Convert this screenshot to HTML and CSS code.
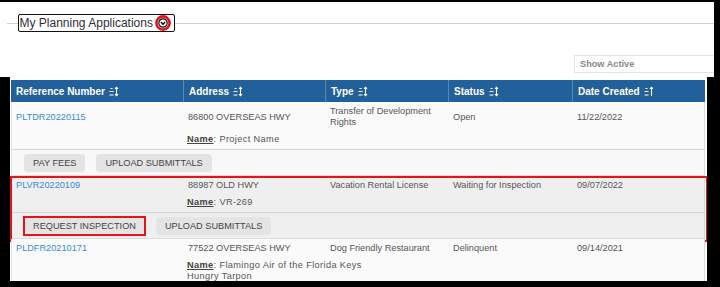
FILE: index.html
```html
<!DOCTYPE html>
<html>
<head>
<meta charset="utf-8">
<link rel="stylesheet" href="styles.css">
</head>
<body>
<div class="frame">
  <div class="top">
    <div class="legend-row">
      <div class="legend">
        <span class="legend-text">My Planning Applications</span>
        <span class="toggle">
          <svg width="16" height="16" viewBox="0 0 16 16">
            <circle cx="8" cy="8" r="6.6" fill="#fff" stroke="#e3141b" stroke-width="2.6"/>
            <circle cx="8" cy="8" r="4.2" fill="#fff" stroke="#111" stroke-width="1.2"/>
            <path d="M5.9 7.1 L8 9.3 L10.1 7.1" fill="none" stroke="#111" stroke-width="1.5"/>
          </svg>
        </span>
      </div>
    </div>
    <div class="filter-row"><div class="select">Show Active</div></div>
  </div>
  <div class="bottom">
    <div class="table">
      <div class="thead">
        <div class="th">Reference Number <svg class="sort" width="10" height="11" viewBox="0 0 10 11"><path d="M1.5 2.5h2M0.5 5.5h4M0.5 9h4" stroke="#fff" stroke-width="1.1"/><path d="M7.5 1.2v8.6M6 2.8l1.5-1.6 1.5 1.6M6 8.2l1.5 1.6 1.5-1.6" stroke="#fff" fill="none" stroke-width="1.1"/></svg></div>
        <div class="th">Address <svg class="sort" width="10" height="11" viewBox="0 0 10 11"><path d="M1.5 2.5h2M0.5 5.5h4M0.5 9h4" stroke="#fff" stroke-width="1.1"/><path d="M7.5 1.2v8.6M6 2.8l1.5-1.6 1.5 1.6M6 8.2l1.5 1.6 1.5-1.6" stroke="#fff" fill="none" stroke-width="1.1"/></svg></div>
        <div class="th">Type <svg class="sort" width="10" height="11" viewBox="0 0 10 11"><path d="M1.5 2.5h2M0.5 5.5h4M0.5 9h4" stroke="#fff" stroke-width="1.1"/><path d="M7.5 1.2v8.6M6 2.8l1.5-1.6 1.5 1.6M6 8.2l1.5 1.6 1.5-1.6" stroke="#fff" fill="none" stroke-width="1.1"/></svg></div>
        <div class="th">Status <svg class="sort" width="10" height="11" viewBox="0 0 10 11"><path d="M1.5 2.5h2M0.5 5.5h4M0.5 9h4" stroke="#fff" stroke-width="1.1"/><path d="M7.5 1.2v8.6M6 2.8l1.5-1.6 1.5 1.6M6 8.2l1.5 1.6 1.5-1.6" stroke="#fff" fill="none" stroke-width="1.1"/></svg></div>
        <div class="th">Date Created <svg class="sort" width="10" height="11" viewBox="0 0 10 11"><path d="M1.5 2.5h2M0.5 5.5h4M0.5 9h4" stroke="#fff" stroke-width="1.1"/><path d="M7.5 1.2v8.8M6 2.8l1.5-1.6 1.5 1.6" stroke="#fff" fill="none" stroke-width="1.1"/></svg></div>
      </div>

      <div class="rec rec-light">
        <div class="main">
          <div class="td"><a class="link">PLTDR20220115</a></div>
          <div class="td">86800 OVERSEAS HWY</div>
          <div class="td">Transfer of Development<br>Rights</div>
          <div class="td">Open</div>
          <div class="td">11/22/2022</div>
        </div>
        <div class="name-row"><div class="name"><u class="name-label">Name</u>: Project Name</div></div>
        <div class="actions actions-light">
          <span class="btn">PAY FEES</span>
          <span class="btn">UPLOAD SUBMITTALS</span>
        </div>
      </div>

      <div class="rec rec-grey">
        <div class="main">
          <div class="td"><a class="link">PLVR20220109</a></div>
          <div class="td">88987 OLD HWY</div>
          <div class="td">Vacation Rental License</div>
          <div class="td">Waiting for Inspection</div>
          <div class="td">09/07/2022</div>
        </div>
        <div class="name-row"><div class="name"><u class="name-label">Name</u>: VR-269</div></div>
        <div class="actions">
          <span class="btn btn-marked">REQUEST INSPECTION</span>
          <span class="btn">UPLOAD SUBMITTALS</span>
        </div>
        <div class="highlight"></div>
      </div>

      <div class="rec rec-light">
        <div class="main">
          <div class="td"><a class="link">PLDFR20210171</a></div>
          <div class="td">77522 OVERSEAS HWY</div>
          <div class="td">Dog Friendly Restaurant</div>
          <div class="td">Delinquent</div>
          <div class="td">09/14/2021</div>
        </div>
        <div class="name-row name-row-last"><div class="name"><u class="name-label">Name</u>: Flamingo Air of the Florida Keys Hungry Tarpon</div></div>
      </div>
    </div>
  </div>
</div>
</body>
</html>
```

FILE: styles.css
```css
* { box-sizing: border-box; }
html, body { margin: 0; padding: 0; }
body {
  background: #000;
  width: 720px;
  height: 287px;
  overflow: hidden;
  font-family: "Liberation Sans", Arial, sans-serif;
  color: #555;
}
.frame { padding-top: 2px; }

.top {
  width: 714px;
  height: 75px;
  background: #fff;
  overflow: hidden;
}
.legend-row {
  display: flex;
  align-items: center;
  padding-top: 12px;
}
.legend-row::before {
  content: "";
  width: 11px;
  margin-left: 7px;
  border-top: 1px solid #cfcfcf;
}
.legend-row::after {
  content: "";
  flex: 1;
  border-top: 1px solid #cfcfcf;
}
.legend {
  display: flex;
  align-items: center;
  height: 18px;
  width: 157px;
  border: 1.5px solid #111;
  border-radius: 2px;
  padding-left: 0.5px;
}
.legend-text {
  font-size: 12px;
  color: #2f2f38;
  line-height: 14px;
}
.toggle { display: flex; margin-left: 2px; }

.filter-row { margin-top: 23px; }
.select {
  margin-left: 574px;
  width: 150px;
  height: 18px;
  border: 1px solid #e3e3e3;
  padding-left: 5px;
  font-size: 9.2px;
  font-weight: bold;
  color: #8a8a8a;
  line-height: 16px;
}

.bottom {
  margin-left: 10px;
  width: 697px;
  height: 204px;
  background: #fff;
  padding-top: 3px;
  padding-left: 1px;
  overflow: hidden;
}
.table { width: 694px; }

.thead, .main {
  display: grid;
  grid-template-columns: 172px 142px 123px 124px 133px;
}
.thead {
  background: #22609b;
  height: 22px;
}
.th {
  display: flex;
  align-items: center;
  gap: 4px;
  padding-left: 5px;
  color: #fff;
  font-size: 10px;
  font-weight: bold;
  border-left: 1px solid #5a88b5;
}
.th:first-child { border-left: none; }
.sort { flex: none; }

.rec {
  position: relative;
  border-right: 1px solid #d9d9d9;
  border-left: 1px solid #e2e2e2;
}
.rec-light { background: #fafafa; }
.rec-grey { background: #efefef; }

.main {
  padding: 4px 0;
  align-items: center;
  font-size: 9.2px;
  line-height: 11px;
}
.td { padding-left: 4px; }
.link { color: #3b8ad6; text-decoration: none; }

.name-row {
  padding: 1.5px 0 4.5px 175px;
  border-bottom: 1px solid #d6d6d6;
  font-size: 9.2px;
  letter-spacing: 0.38px;
  line-height: 11px;
}
.name-row-last { border-bottom: none; }
.name { max-width: 182px; color: #555; }
.name-label { color: #444; font-weight: bold; }

.actions {
  display: flex;
  gap: 11px;
  padding: 4px 12px 3px;
  border-bottom: 1px solid #dcdcdc;
}
.actions-light { background: #f8f8f8; }
.btn {
  height: 18px;
  padding: 0 9px;
  background: #e4e4e4;
  border-radius: 4px;
  font-size: 9.2px;
  line-height: 18px;
  color: #444;
}
.btn-marked {
  border-radius: 0;
  outline: 2px solid #e3141b;
  outline-offset: -1px;
}
.highlight {
  position: absolute;
  top: 0;
  left: -2px;
  right: -4px;
  bottom: -3px;
  border: 2px solid #e3141b;
  pointer-events: none;
}
```
